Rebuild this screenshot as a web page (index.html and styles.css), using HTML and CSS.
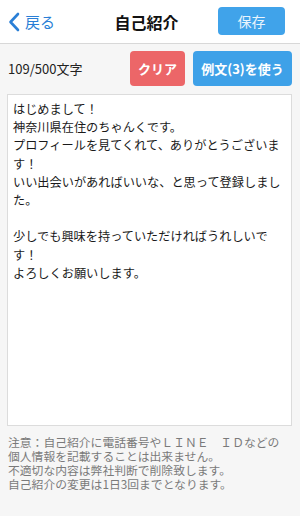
FILE: index.html
```html
<!DOCTYPE html>
<html lang="ja">
<head>
<meta charset="utf-8">
<link rel="stylesheet" href="styles.css">
</head>
<body>
<header class="nav">
  <a class="back">
    <svg class="chev" width="12" height="20" viewBox="0 0 12 20"><path d="M10 2 L2.5 10 L10 18" fill="none" stroke="#2a7fd6" stroke-width="2.6" stroke-linecap="round" stroke-linejoin="round"/></svg>
    <span>戻る</span>
  </a>
  <h1 class="title">自己紹介</h1>
  <button class="save">保存</button>
</header>
<main class="content">
  <div class="toolbar">
    <span class="count">109/500文字</span>
    <div class="actions">
      <button class="btn clear">クリア</button>
      <button class="btn example">例文(3)を使う</button>
    </div>
  </div>
  <div class="editor">はじめまして！
神奈川県在住のちゃんくです。
プロフィールを見てくれて、ありがとうございます！
いい出会いがあればいいな、と思って登録しました。

少しでも興味を持っていただければうれしいです！
よろしくお願いします。</div>
  <p class="note">注意：自己紹介に電話番号やＬＩＮＥ　ＩＤなどの<br>個人情報を記載することは出来ません。<br>不適切な内容は弊社判断で削除致します。<br>自己紹介の変更は1日3回までとなります。</p>
</main>
</body>
</html>
```

FILE: styles.css
```css
* { box-sizing: border-box; }
html, body { margin: 0; padding: 0; }
body {
  width: 300px;
  height: 516px;
  background: #f6f6f6;
  font-family: "Noto Sans CJK JP", "Noto Sans", sans-serif;
  color: #222;
  overflow: hidden;
}
.nav {
  height: 44px;
  background: #fff;
  border-bottom: 1px solid #d8d8d8;
  display: grid;
  grid-template-columns: 1fr auto 1fr;
  align-items: center;
  padding: 0 15px 0 8px;
}
.back {
  display: flex;
  align-items: center;
  gap: 5px;
  color: #2a7fd6;
  font-size: 15px;
  justify-self: start;
}
.chev { display: block; }
.title {
  margin: 0;
  font-size: 16px;
  font-weight: 700;
  color: #111;
}
.save {
  justify-self: end;
  width: 67px;
  height: 28px;
  margin-top: -1px;
  border: none;
  border-radius: 4px;
  background: #40a3ea;
  color: #e9f4fd;
  font-family: inherit;
  font-size: 14px;
  padding: 0;
}
.content {
  padding: 6px 8px 0 7px;
}
.toolbar {
  height: 36px;
  display: flex;
  align-items: center;
  justify-content: space-between;
}
.count {
  font-size: 13px;
  color: #222;
  padding-left: 1px;
}
.actions {
  display: flex;
  gap: 8px;
}
.btn {
  height: 35px;
  border: none;
  border-radius: 4px;
  color: #fff;
  font-family: inherit;
  font-size: 13px;
  font-weight: 700;
  padding: 0;
}
.clear { width: 55px; background: #ec6668; }
.example { width: 99px; background: #3ea1e8; }
.editor {
  margin-top: 8px;
  height: 332px;
  background: #fff;
  border: 1px solid #dcdcdc;
  padding: 5px 4px 0 5px;
  font-size: 12.2px;
  line-height: 18.2px;
  color: #1a1a1a;
  white-space: pre-wrap;
  word-break: break-all;
}
.note {
  margin: 9px 0 0 1px;
  font-size: 11.8px;
  line-height: 14px;
  color: #7a7a7a;
}
```
